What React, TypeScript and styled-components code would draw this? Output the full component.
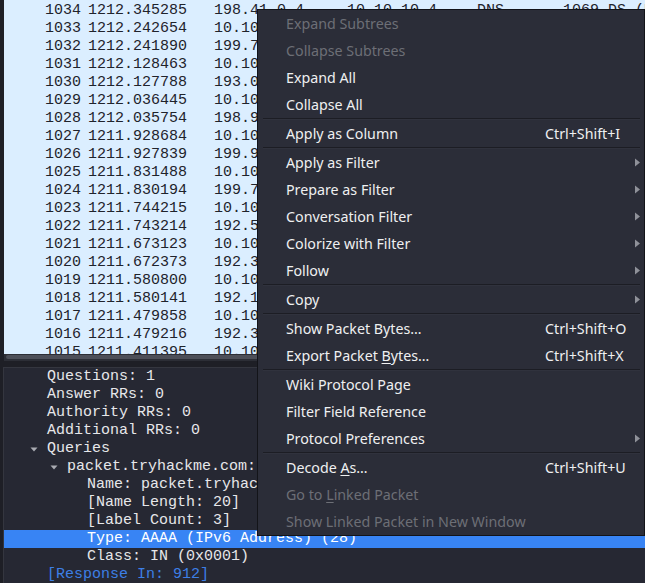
import React from "react";
import styled, { createGlobalStyle } from "styled-components";

const Global = createGlobalStyle`
  html, body { margin: 0; padding: 0; background: #1e1f26; }
  body { width: 645px; height: 583px; overflow: hidden; }
`;

const Screen = styled.div`
  position: relative;
  width: 645px;
  height: 583px;
  overflow: hidden;
  display: flex;
  flex-direction: column;
  background: #1e1f26;
`;

const PacketList = styled.div`
  margin-left: 4px;
  height: 352px;
  padding-top: 2px;
  background: #dbeeff;
  overflow: hidden;
  font-family: "Liberation Mono", monospace;
  font-size: 15px;
  color: #1f232c;
`;

const PacketRow = styled.div`
  display: flex;
  height: 18px;
  line-height: 18px;
  white-space: nowrap;
`;

const Cell = styled.span<{ $w?: number; $right?: boolean }>`
  flex: ${(p) => (p.$w ? `0 0 ${p.$w}px` : "1 1 auto")};
  text-align: ${(p) => (p.$right ? "right" : "left")};
  overflow: hidden;
`;

const ScrollTrack = styled.div`
  margin-left: 4px;
  height: 7px;
  padding: 1px 2px 2px 2px;
  box-sizing: border-box;
  background: #2c2e36;
`;

const ScrollThumb = styled.div`
  height: 4px;
  border-radius: 2px;
  background: #4d4f58;
`;

const Gap = styled.div`
  height: 6px;
`;

const DetailPane = styled.div`
  flex: 1;
  margin-left: 3px;
  border-top: 1px solid #34363f;
  border-left: 1px solid #34363f;
  background: #262833;
  font-family: "Liberation Mono", monospace;
  font-size: 15px;
  color: #e6e7ea;
  overflow: hidden;
`;

const TreeRow = styled.div<{ $level: number; $selected?: boolean; $link?: boolean }>`
  display: flex;
  align-items: center;
  height: 18px;
  line-height: 18px;
  padding-left: ${(p) => 43 + p.$level * 20}px;
  white-space: nowrap;
  background: ${(p) => (p.$selected ? "#3884f4" : "transparent")};
  color: ${(p) => (p.$link ? "#3d7fe6" : p.$selected ? "#ffffff" : "#e6e7ea")};
`;

const Toggle = styled.span`
  width: 17px;
  margin-left: -17px;
  display: flex;
  align-items: center;
`;

const Menu = styled.div`
  position: absolute;
  left: 257px;
  top: 9px;
  width: 386px;
  background: #2b2d38;
  border: 1px solid #131419;
  font-family: "Noto Sans", sans-serif;
  font-size: 14.25px;
  color: #eff0f1;
`;

const MenuItem = styled.div<{ $disabled?: boolean }>`
  display: grid;
  grid-template-columns: 259px 90px 1fr;
  align-items: center;
  height: 27px;
  padding-left: 28px;
  white-space: nowrap;
  color: ${(p) => (p.$disabled ? "#6d6f76" : "#eff0f1")};
  u {
    text-decoration-thickness: 1px;
    text-underline-offset: 2px;
  }
`;

const Shortcut = styled.span`
  color: #eff0f1;
`;

const SubArrow = styled.span`
  display: flex;
  align-items: center;
`;

const Separator = styled.div`
  height: 2px;
  margin: 0 4px 0 5px;
  box-sizing: border-box;
  border-top: 1px solid #1c1d24;
  border-bottom: 1px solid #30323d;
`;

const packets: [string, string, string][] = [
  ["1034", "1212.345285", "198.41.0.4"],
  ["1033", "1212.242654", "10.10.10.4"],
  ["1032", "1212.241890", "199.7.83.42"],
  ["1031", "1212.128463", "10.10.10.4"],
  ["1030", "1212.127788", "193.0.14.129"],
  ["1029", "1212.036445", "10.10.10.4"],
  ["1028", "1212.035754", "198.97.190.53"],
  ["1027", "1211.928684", "10.10.10.4"],
  ["1026", "1211.927839", "199.9.14.201"],
  ["1025", "1211.831488", "10.10.10.4"],
  ["1024", "1211.830194", "199.7.91.13"],
  ["1023", "1211.744215", "10.10.10.4"],
  ["1022", "1211.743214", "192.58.128.30"],
  ["1021", "1211.673123", "10.10.10.4"],
  ["1020", "1211.672373", "192.36.148.17"],
  ["1019", "1211.580800", "10.10.10.4"],
  ["1018", "1211.580141", "192.112.36.4"],
  ["1017", "1211.479858", "10.10.10.4"],
  ["1016", "1211.479216", "192.33.4.12"],
  ["1015", "1211.411395", "10.10.10.4"],
];

const DownArrow = () => (
  <svg width="8" height="5" viewBox="0 0 8 5">
    <path d="M0.5 0.5 L7.5 0.5 L4 4.5 Z" fill="#a9abb2" />
  </svg>
);

const RightArrow = () => (
  <svg width="5" height="9" viewBox="0 0 5 9">
    <path d="M0 0.5 L5 4.5 L0 8.5 Z" fill="#8f9199" />
  </svg>
);

type Entry =
  | { sep: true }
  | { label: React.ReactNode; shortcut?: string; sub?: boolean; disabled?: boolean };

const menu: Entry[] = [
  { label: "Expand Subtrees", disabled: true },
  { label: "Collapse Subtrees", disabled: true },
  { label: "Expand All" },
  { label: "Collapse All" },
  { sep: true },
  { label: "Apply as Column", shortcut: "Ctrl+Shift+I" },
  { sep: true },
  { label: "Apply as Filter", sub: true },
  { label: "Prepare as Filter", sub: true },
  { label: "Conversation Filter", sub: true },
  { label: "Colorize with Filter", sub: true },
  { label: "Follow", sub: true },
  { sep: true },
  { label: "Copy", sub: true },
  { sep: true },
  { label: "Show Packet Bytes…", shortcut: "Ctrl+Shift+O" },
  { label: <>Export Packet <u>B</u>ytes…</>, shortcut: "Ctrl+Shift+X" },
  { sep: true },
  { label: "Wiki Protocol Page" },
  { label: "Filter Field Reference" },
  { label: "Protocol Preferences", sub: true },
  { sep: true },
  { label: <>Decode <u>A</u>s…</>, shortcut: "Ctrl+Shift+U" },
  { label: <>Go to <u>L</u>inked Packet</>, disabled: true },
  { label: "Show Linked Packet in New Window", disabled: true },
];

export default function App() {
  return (
    <>
      <Global />
      <Screen>
        <PacketList>
          {packets.map(([no, time, src], i) => (
            <PacketRow key={no}>
              <Cell $w={77} $right>{no}</Cell>
              <Cell $w={7} />
              <Cell $w={126}>{time}</Cell>
              <Cell $w={133}>{src}</Cell>
              <Cell $w={130}>{i % 2 === 0 ? "10.10.10.4" : "8.8.8.8"}</Cell>
              <Cell $w={86}>DNS</Cell>
              <Cell>{i === 0 ? "1069 DS (P" : "82 Standard query"}</Cell>
            </PacketRow>
          ))}
        </PacketList>
        <ScrollTrack>
          <ScrollThumb />
        </ScrollTrack>
        <Gap />
        <DetailPane>
          <TreeRow $level={0}>Questions: 1</TreeRow>
          <TreeRow $level={0}>Answer RRs: 0</TreeRow>
          <TreeRow $level={0}>Authority RRs: 0</TreeRow>
          <TreeRow $level={0}>Additional RRs: 0</TreeRow>
          <TreeRow $level={0}>
            <Toggle><DownArrow /></Toggle>Queries
          </TreeRow>
          <TreeRow $level={1}>
            <Toggle><DownArrow /></Toggle>packet.tryhackme.com: type AAAA, class IN
          </TreeRow>
          <TreeRow $level={2}>Name: packet.tryhackme.com</TreeRow>
          <TreeRow $level={2}>[Name Length: 20]</TreeRow>
          <TreeRow $level={2}>[Label Count: 3]</TreeRow>
          <TreeRow $level={2} $selected>Type: AAAA (IPv6 Address) (28)</TreeRow>
          <TreeRow $level={2}>Class: IN (0x0001)</TreeRow>
          <TreeRow $level={0} $link>[Response In: 912]</TreeRow>
        </DetailPane>
        <Menu>
          {menu.map((e, i) =>
            "sep" in e ? (
              <Separator key={i} />
            ) : (
              <MenuItem key={i} $disabled={e.disabled}>
                <span>{e.label}</span>
                <Shortcut>{e.shortcut ?? ""}</Shortcut>
                <SubArrow>{e.sub ? <RightArrow /> : null}</SubArrow>
              </MenuItem>
            )
          )}
        </Menu>
      </Screen>
    </>
  );
}
